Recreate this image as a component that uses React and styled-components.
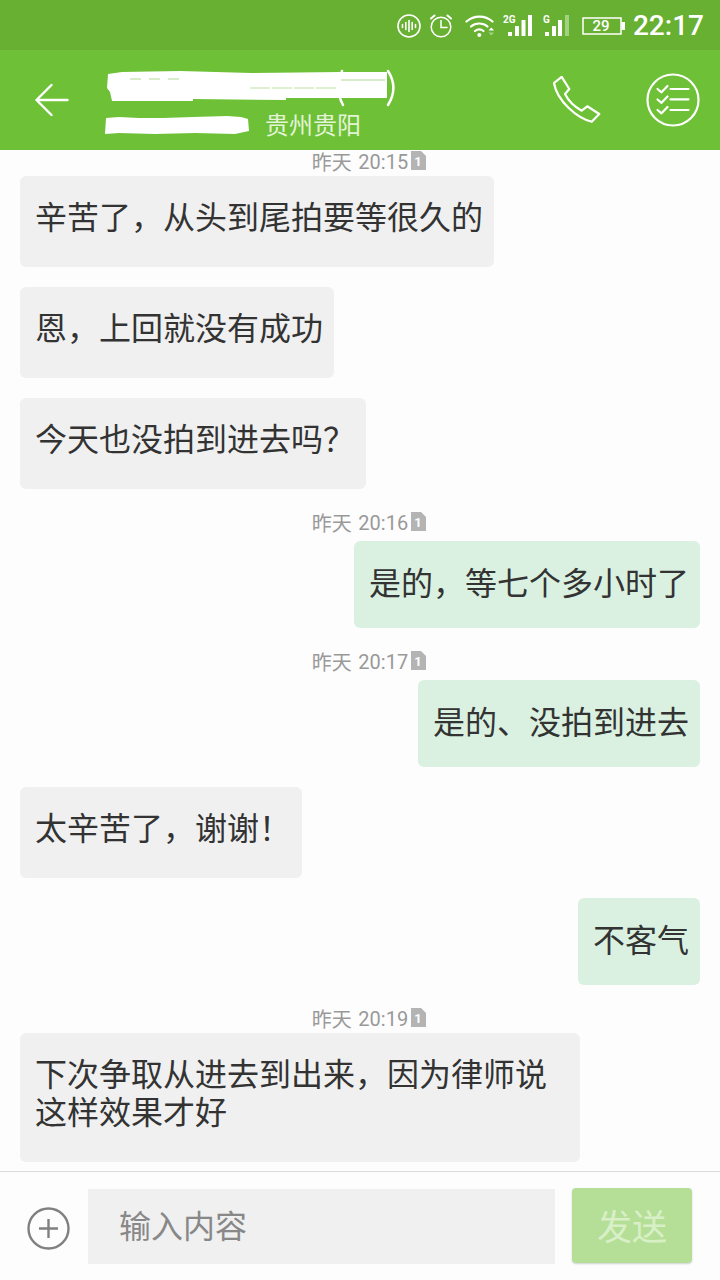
import styled, { createGlobalStyle } from "styled-components";

const cjk = `"Noto Sans CJK SC", "Noto Sans", sans-serif`;
const headerGreen = "#6ec136";

const GlobalStyle = createGlobalStyle`
  html, body {
    margin: 0;
    padding: 0;
    background: #fdfdfd;
  }
  * {
    box-sizing: border-box;
  }
`;

const Screen = styled.div`
  width: 720px;
  height: 1280px;
  display: flex;
  flex-direction: column;
  overflow: hidden;
  background: #fdfdfd;
  font-family: ${cjk};
`;

const StatusBar = styled.div`
  height: 50px;
  flex: none;
  background: #68b032;
  display: flex;
  align-items: center;
  justify-content: flex-end;
  padding: 1px 16px 0 0;
  color: #fff;
`;

const StatusIcon = styled.svg`
  display: block;
  flex: none;
  margin-right: ${(p) => p.$gap || 0}px;
`;

const Clock = styled.span`
  font-family: Roboto, sans-serif;
  font-size: 28px;
  font-weight: 500;
  line-height: 48px;
  margin-left: 8px;
`;

const Header = styled.header`
  height: 100px;
  flex: none;
  background: ${headerGreen};
  display: flex;
  align-items: center;
  color: #fff;
`;

const BackButton = styled.svg`
  display: block;
  flex: none;
  margin-left: 35px;
`;

const TitleBlock = styled.div`
  width: 448px;
  margin-left: 36px;
  height: 100px;
  display: flex;
  flex-direction: column;
`;

const Scribble = styled.svg`
  display: block;
  margin-top: ${(p) => p.$top || 0}px;
  flex: none;
`;

const SubRow = styled.div`
  display: flex;
  align-items: center;
  height: 32px;
`;

const Region = styled.span`
  font-size: 24px;
  line-height: 32px;
  color: #e3f3d8;
  margin-left: 14px;
`;

const PhoneIcon = styled.svg`
  display: block;
  flex: none;
`;

const ChecklistIcon = styled.svg`
  display: block;
  flex: none;
  margin-left: 45px;
`;

const Thread = styled.main`
  flex: 1;
  min-height: 0;
  display: flex;
  flex-direction: column;
`;

const Stamp = styled.div`
  height: 24px;
  margin: 2px 0;
  display: flex;
  align-items: center;
  justify-content: center;
  gap: 3px;
  font-size: 20px;
  line-height: 24px;
  color: #999;
  padding-left: 18px;
  white-space: pre;
  &:first-child {
    margin-top: 0;
  }
`;

const StampDigits = styled.span`
  font-family: Roboto, sans-serif;
  margin-left: -1px;
`;

const SimIcon = styled.svg`
  display: block;
  flex: none;
  margin-bottom: 3px;
`;

const Bubble = styled.div`
  align-self: ${(p) => (p.$mine ? "flex-end" : "flex-start")};
  max-width: 560px;
  margin: ${(p) => (p.$mine ? "0 20px 20px 0" : "0 0 20px 20px")};
  padding: ${(p) => (p.$mine ? "21px 11px 28px 15px" : "20px 11px 33px 15px")};
  border-radius: 6px;
  background: ${(p) => (p.$mine ? "#daf1e1" : "#f0f0f0")};
  color: #333;
  font-size: 32px;
  line-height: 38px;
  ${Stamp} + & {
    margin-top: ${(p) => (p.$mine ? 4 : 0)}px;
  }
`;

const Composer = styled.footer`
  height: 109px;
  flex: none;
  border-top: 1px solid #dcdcdc;
  display: flex;
  align-items: flex-start;
  padding: 16px 0 0 27px;
`;

const PlusIcon = styled.svg`
  display: block;
  flex: none;
  margin-top: 19px;
`;

const Input = styled.div`
  width: 467px;
  height: 75px;
  margin: 1px 0 0 18px;
  padding-left: 31px;
  background: #f0f0f0;
  color: #888;
  font-size: 32px;
  line-height: 71px;
`;

const SendButton = styled.div`
  width: 120px;
  height: 75px;
  margin-left: 17px;
  border-radius: 4px;
  background: #b5df96;
  box-shadow: 0 1px 2px rgba(0, 0, 0, 0.18);
  color: #d9efc8;
  font-size: 35px;
  line-height: 74px;
  text-align: center;
`;

const Voice = () => (
  <StatusIcon $gap={9} width="24" height="24" viewBox="0 0 24 24" fill="none" stroke="#fff" strokeWidth="1.6" strokeLinecap="round">
    <circle cx="12" cy="12" r="11" />
    <path d="M5.5 10.500v3M8.800 8.500v7M12 6.500v11M15.200 8.500v7M18.500 10.500v3" />
  </StatusIcon>
);

const Alarm = () => (
  <StatusIcon $gap={13} width="22" height="24" viewBox="0 0 22 24" fill="none" stroke="#fff" strokeWidth="1.5" strokeLinecap="round">
    <circle cx="11" cy="13" r="9.800" />
    <path d="M11 6.500v7h6" />
    <path d="M1 4.500 4.500 1.500M21 4.500 17.500 1.500" strokeWidth="2" />
  </StatusIcon>
);

const Wifi = () => (
  <StatusIcon $gap={8} width="30" height="24" viewBox="0 0 30 24" fill="none" stroke="#fff" strokeWidth="2.200" strokeLinecap="round">
    <path d="M1.500 7.500C9 1 20 1 27.500 7.500" />
    <path d="M6 12.500c4.500-4 12-4 16.500 0" />
    <path d="M10 17c2.500-2 6-2 8.500 0" />
    <circle cx="14.300" cy="21" r="2" fill="#fff" stroke="none" />
    <path d="m23.500 16.500 2.800-3 2.800 3z" fill="#fff" stroke="none" />
    <path d="m23.500 18.500 2.800 3 2.800-3z" fill="#a5d383" stroke="none" />
  </StatusIcon>
);

const Signal = ({ label, bars, width, gap, lastColor }) => (
  <StatusIcon $gap={gap} width={width} height="23" viewBox={`0 0 ${width} 23`}>
    <text x="0" y="8.500" fontFamily="Roboto, sans-serif" fontSize="10" fontWeight="700" fill="#fff">
      {label}
    </text>
    <rect x={bars[0]} y="18" width="4" height="4" fill="#fff" />
    <rect x={bars[1]} y="12" width="4" height="10" fill="#fff" />
    <rect x={bars[2]} y="6" width="4" height="16" fill="#fff" />
    <rect x={bars[3]} y="1" width="4" height="21" fill={lastColor} />
  </StatusIcon>
);

const Battery = () => (
  <StatusIcon width="43" height="18" viewBox="0 0 43 18">
    <rect x="1" y="1" width="38" height="16" fill="none" stroke="#fff" strokeWidth="1.500" />
    <rect x="39.500" y="5" width="3.500" height="8" fill="#fff" />
    <text x="19" y="14" textAnchor="middle" fontFamily="Roboto, sans-serif" fontSize="15" fontWeight="500" fill="#fff">
      29
    </text>
  </StatusIcon>
);

const SimBadge = () => (
  <SimIcon width="15" height="19" viewBox="0 0 15 19">
    <path d="M0 0h10l5 5v14H0z" fill="#b4b4b4" />
    <text x="7" y="15" textAnchor="middle" fontFamily="Roboto, sans-serif" fontSize="13" fontWeight="700" fill="#fdfdfd">
      1
    </text>
  </SimIcon>
);

const Time = ({ value }) => (
  <Stamp>
    昨天 <StampDigits>{value}</StampDigits>
    <SimBadge />
  </Stamp>
);

export default function App() {
  return (
    <Screen>
      <GlobalStyle />
      <StatusBar>
        <Voice />
        <Alarm />
        <Wifi />
        <Signal label="2G" bars={[5, 12, 18.5, 25]} width="29" gap={11} lastColor="#fff" />
        <Signal label="G" bars={[2, 9, 15, 22]} width="26" gap={13} lastColor="#a2d17f" />
        <Battery />
        <Clock>22:17</Clock>
      </StatusBar>
      <Header>
        <BackButton width="34" height="34" viewBox="0 0 34 34" fill="none" stroke="#fff" strokeWidth="2.400" strokeLinecap="round" strokeLinejoin="round">
          <path d="M16.500 2 1.500 17l15 15M1.500 17h31" />
        </BackButton>
        <TitleBlock>
          <Scribble $top={18} width="292" height="40" viewBox="0 0 292 40">
            <path fill="#fff" d="M3 6 17 4l58-1 71 2 89-1h47v26H181v2l-93-1v2H7l-2-9-3-4z" />
            <path fill="none" stroke={headerGreen} strokeWidth="0.8" strokeOpacity="0.7" strokeDasharray="11 8" d="M25 11h50" />
            <path fill="none" stroke={headerGreen} strokeWidth="0.8" strokeOpacity="0.6" strokeDasharray="20 2" d="M145 20h88" />
            <path fill="none" stroke={headerGreen} strokeWidth="0.8" strokeOpacity="0.7" d="M236 12h44" />
            <path fill="none" stroke="#fff" strokeWidth="2.500" strokeLinecap="round" d="M237 3c-5 11-5 23 1 34M283 3c7 11 7 23 0 34" />
          </Scribble>
          <SubRow>
            <Scribble width="146" height="19" viewBox="0 0 146 19" fill="#fff">
              <path d="M1 3 14 2l20 1 24 0 30-1 34-1 14 1 7 2 1 12-14 3-40-1-40 1-36-1-14 1z" />
            </Scribble>
            <Region>贵州贵阳</Region>
          </SubRow>
        </TitleBlock>
        <PhoneIcon width="48" height="48" viewBox="0 0 48 48" fill="none" stroke="#fff" strokeWidth="2.200" strokeLinejoin="round">
          <path d="M1 7 8.700.800 16.300 13 12 18c3 6 10 13 16.700 16.700l5.600-4.400 12 7.700-7.600 7.700C24 42 4 25 1 7z" />
        </PhoneIcon>
        <ChecklistIcon width="54" height="54" viewBox="0 0 54 54" fill="none" stroke="#fff" strokeWidth="2.200" strokeLinecap="round" strokeLinejoin="round">
          <circle cx="27" cy="27" r="25.500" />
          <path d="m11.500 16 4 3.300 6-6.300M11.500 26.500l4 3.300 6-6.300M11.500 37l4 3.300 6-6.300" />
          <path d="M24.500 16h18M24.500 26.300h18M24.500 37h18" />
        </ChecklistIcon>
      </Header>
      <Thread>
        <Time value="20:15" />
        <Bubble>辛苦了，从头到尾拍要等很久的</Bubble>
        <Bubble>恩，上回就没有成功</Bubble>
        <Bubble>今天也没拍到进去吗？</Bubble>
        <Time value="20:16" />
        <Bubble $mine>是的，等七个多小时了</Bubble>
        <Time value="20:17" />
        <Bubble $mine>是的、没拍到进去</Bubble>
        <Bubble>太辛苦了，谢谢！</Bubble>
        <Bubble $mine>不客气</Bubble>
        <Time value="20:19" />
        <Bubble>下次争取从进去到出来，因为律师说这样效果才好</Bubble>
      </Thread>
      <Composer>
        <PlusIcon width="43" height="43" viewBox="0 0 43 43" fill="none" stroke="#808080" strokeWidth="2.400">
          <circle cx="21.500" cy="21.500" r="20" />
          <path d="M21.500 12v19M12 21.500h19" />
        </PlusIcon>
        <Input>输入内容</Input>
        <SendButton>发送</SendButton>
      </Composer>
    </Screen>
  );
}
